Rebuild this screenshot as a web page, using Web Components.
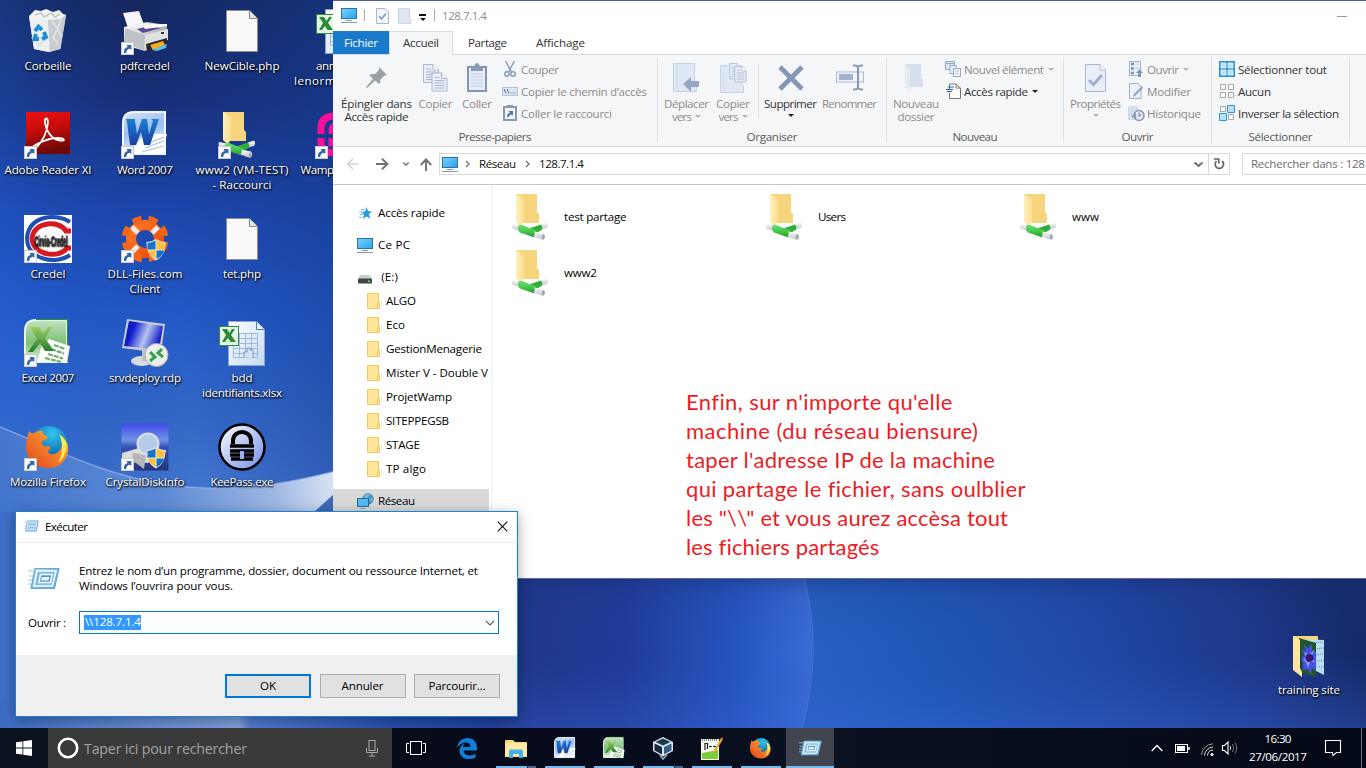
<!DOCTYPE html>
<html lang="fr">
<head>
<meta charset="utf-8">
<title>Bureau</title>
<style>
html,body{margin:0;padding:0;overflow:hidden}
body{font-family:"Open Sans","Noto Sans",sans-serif;font-size:11.6px}
</style>
</head>
<body>
<desk-top></desk-top>
<script>
const arrowBadge='<g transform="translate(0 35)"><rect x=".5" y=".5" width="12" height="12" fill="#fdfdfd" stroke="#c9c9c9"/><path d="M3 11C2.6 7.5 4 5.4 6.6 4.9L5.6 3H10.4V8L8.8 6.8C6.6 7.2 5.4 8.4 5.2 11Z" fill="#3467a8"/></g>';
const shield='<g transform="translate(24.500 24)"><path d="M10.500 0C7.500 2 4.500 2.800 1 3C1 12 4 18 10.500 21.500C17 18 20 12 20 3C16.500 2.800 13.500 2 10.500 0Z" fill="#e8e8e8"/><path d="M10 1.500C7 3.300 5 3.700 2 4V10.500H10Z" fill="#1573c6"/><path d="M11 1.500C14 3.300 16 3.700 19 4V10.500H11Z" fill="#fcc03c"/><path d="M2.500 11.500H10V20C6 18 3.500 15.500 2.500 11.500Z" fill="#fcc03c"/><path d="M18.500 11.500H11V20C15 18 17.500 15.500 18.500 11.500Z" fill="#1573c6"/></g>';
const netFolder='<defs><linearGradient id="a" x2="1"><stop stop-color="#fff0bd"/><stop offset="1" stop-color="#fbdf90"/></linearGradient><linearGradient id="n" x2="0" y2="1"><stop stop-color="#6fdf72"/><stop offset=".5" stop-color="#46c84d"/><stop offset="1" stop-color="#26992e"/></linearGradient><linearGradient id="m" x2="0" y2="1"><stop stop-color="#fafafa"/><stop offset="1" stop-color="#bfc3c8"/></linearGradient></defs><path d="M5 0H26V18L28 20V29H13L5 27Z" fill="#f6d57c"/><path d="M5 0L13 5V28L9.500 32L5 28Z" fill="url(#a)"/><path d="M1 30L9 31.500V37L1 34.500Q0 32 1 30Z" fill="url(#m)"/><path d="M30 30.500L36 28.500Q38 31 36 34L30 35.500Z" fill="url(#m)"/><path d="M18 34.500L30 30.500Q32 32.500 31 35.500L24 40Z" fill="#2fae38"/><path d="M7.500 31.500Q9 30.500 11 31L25 36.500Q27 40 23.500 43.500L9 38.500Q6 36 7.500 31.500Z" fill="url(#n)"/><path d="M23.500 37.500L33 39.500Q36 43 32 46L22.500 42.500Q24.500 40 23.500 37.500Z" fill="url(#m)"/><ellipse cx="32.300" cy="42.700" rx="1.500" ry="2.500" fill="#a4a8ad"/>';
const page='<path d="M8.500 3.500H31.500L39.500 11.500V44.500H8.500Z" fill="#f9f9f9" stroke="#8c8c8c"/><path d="M31.500 3.500V11.500H39.500" fill="#e4e4e4" stroke="#8c8c8c"/>';
const wordLogo='<defs><linearGradient id="w" x1="0" y1="0" x2=".3" y2="1"><stop stop-color="#d6e6fa"/><stop offset=".5" stop-color="#9cbdee"/><stop offset="1" stop-color="#e9f2fd"/></linearGradient><linearGradient id="v" x2="0" y2="1"><stop stop-color="#1c7fd6"/><stop offset="1" stop-color="#1a3d9e"/></linearGradient></defs><path d="M12 1H43V43H1V12Q1 1 12 1Z" fill="url(#w)" stroke="#f1f6fc" stroke-width="2"/><path d="M8 42L22 23L45 23L42 34V42Z" fill="#fff"/><path d="M27 32L42 26M23 37L42 30M20 41L41 35" stroke="#a9c2e6" stroke-width="1.200"/><path d="M4 8H13V10L15 23L20 8H25L27 23L31 10L29 8H37L28 34H22L19 21L14 34H8L5 11Z" fill="url(#v)"/>';
const excelLogo='<defs><linearGradient id="w" x2="0" y2="1"><stop stop-color="#c2e3bd"/><stop offset=".55" stop-color="#7cbf75"/><stop offset="1" stop-color="#edf8ea"/></linearGradient><linearGradient id="v" x2="0" y2="1"><stop stop-color="#9ad060"/><stop offset="1" stop-color="#257a2d"/></linearGradient></defs><path d="M12 1H43V43H1V12Q1 1 12 1Z" fill="url(#w)" stroke="#e6f5e4" stroke-width="2"/><path d="M12 .5H43.500V43" fill="none" stroke="#2b8b3c"/><path d="M17 28L25 20L46 27L43 44L14 42Z" fill="#fff"/><path d="M30 26L41 30M27 30L40 34.500M24 35L39 39.500M21 39L37 43" stroke="#6fae6a" stroke-width="2.200" stroke-dasharray="5 1"/><path d="M6 8H15L19 15L24 8H28L21 19L30 32H21L16 24L9 33H4L13 20Z" fill="url(#v)"/>';
const firefox='<defs><radialGradient id="b" cx=".6" cy=".2" r=".8"><stop stop-color="#32c6ee"/><stop offset=".6" stop-color="#1478b8"/><stop offset="1" stop-color="#123a78"/></radialGradient><linearGradient id="f" x1="0" x2="1" y1="1" y2="0"><stop stop-color="#e0431c"/><stop offset=".6" stop-color="#f5872a"/><stop offset="1" stop-color="#fde23c"/></linearGradient></defs><circle cx="25" cy="22" r="20" fill="url(#b)"/><path d="M5 7C6 9 8 10 11 9C14 7 17 7 19 7L19 10C22 11 24 13 24 15L18 18C18 22 20 23 26 23C28 24 27 26 24 28C28 34 36 30 38 24C40 18 38 14 36 11C42 14 46 20 45 28C43 38 36 45 25 45C12 45 2 36 2 23C2 17 4 12 5 7Z" fill="url(#f)"/><path d="M36 11C43 15 45 22 42 29C41 34 38 37 35 39C40 30 40 20 36 11Z" fill="#fde85a"/>';
const runIcon='<defs><linearGradient id="r" x2="1" y2="1"><stop stop-color="#b8dcf3"/><stop offset="1" stop-color="#4ba2de"/></linearGradient></defs><path d="M0 4H6M1 9H5M0 13H4M0 17H3" stroke="#9ac8e8" stroke-width="1.200"/><path d="M7 1.500H31L26.500 21.500H3Z" fill="url(#r)" stroke="#69a8d6" stroke-width="1.200"/><path d="M9 4H28L24.500 19H6Z" fill="#7fbce6" stroke="#fff" stroke-width="1.500"/><path d="M12.500 7.500H24L22.500 15.500H11Z" fill="#4d98d4" stroke="#fff" stroke-width="1.500"/><path d="M14 10H21.500L20.500 13.500H13Z" fill="#e7f4fc"/>';
const pcIcon='<defs><linearGradient id="p" x2="1" y2="1"><stop stop-color="#77d5ff"/><stop offset="1" stop-color="#2ba0ee"/></linearGradient></defs><rect x=".5" y=".5" width="15" height="10" fill="url(#p)" stroke="#2e7399"/><path d="M5 12.500H11M0 14.500H16" stroke="#7f9db0" stroke-width="1"/>';
const paper='<path d="M.5 .5H10L15.500 6V18.500H.5Z" fill="#e9eff8" stroke="#a9b8cf"/><path d="M10 .5V6H15.500" fill="#fff" stroke="#a9b8cf"/><path d="M3 5H8M3 8H13M3 10.500H13M3 13H13M3 15.500H13" stroke="#a9b8cf"/>';
const I={
bin:[48,48,'<path d="M5 9L42 8L36.500 42L24 45L10 42Z" fill="#d9dcde"/><path d="M5 9L24 12L26 45L10 42Z" fill="#eceeef"/><path d="M24 12L42 8L36 42L26 45Z" fill="#c9cdd0"/><path d="M28 14L34 22L29 30L34 37M37 12L34 22L37 30M8 30L15 38L22 32" stroke="#dfe2e4" stroke-width="2" fill="none"/><path d="M5 9L11 3L17 4L22 2L29 5L35 3L39 7L42 8L36 12L25 13L12 12Z" fill="#f4f4f4"/><path d="M11 8L17 6L20 10L27 6L31 10L36 7" stroke="#c3c7ca" fill="none" stroke-width="1.500"/><g fill="none" stroke="#1a8bdd" stroke-width="3.800"><path d="M11 24L14.500 19.500L18 23"/><path d="M20 25L22 30L18 32"/><path d="M15 32H10.500L12 27"/></g>'],
printer:[48,48,'<defs><linearGradient id="g" x2="1"><stop stop-color="#fafafa"/><stop offset="1" stop-color="#a9abae"/></linearGradient></defs><path d="M2 6L18 4L23 18L7 21Z" fill="#f6f7f8"/><path d="M3 20L26 15L46 18L46 34L24 44L3 38Z" fill="url(#g)"/><path d="M4 21L24 28L23 43L3 36Z" fill="#bfc2c5"/><path d="M8 19L24 16L44 18L25 24Z" fill="#f3f3f3"/><path d="M16 22L26 19.500L40 21L22 26Z" fill="#5b4a96"/><path d="M24 28L47 22V33L24 40Z" fill="#dfe1e3"/><path d="M25 37L46 31V37L26 44Z" fill="#29292d"/><path d="M29 38L42 34L44 38L32 43Z" fill="#f5ab23"/><path d="M31 43L46 37L45 41L36 44Z" fill="#55c1e8"/><path d="M21 18L46 17V19L24 22Z" fill="#fff"/><rect x="40" y="25" width="3" height="2" fill="#333"/>'+arrowBadge],
page:[48,48,page],
xlsx:[48,48,'<defs><linearGradient id="g" x2="1" y2="1"><stop stop-color="#fff"/><stop offset="1" stop-color="#c3daf3"/></linearGradient></defs><path d="M10.500 2.500H38.500L46.500 10.500V46.500H10.500Z" fill="url(#g)" stroke="#8aa5ca"/><path d="M38.500 2.500V10.500H46.500" fill="#e8f0fa" stroke="#5779ab"/><path d="M15 14.500H39.500V38.500H15.500ZM15 19.500H39M15 24.500H39M15 29.500H39M15 34.500H39M21.500 14V39M27.500 14V39M33.500 14V39" fill="none" stroke="#9fb9dc"/><path d="M26 38V33H29V29H32V31H35V39" fill="#d5e4f5" stroke="#6f94c4"/><rect x="1.500" y="7.500" width="19" height="19" fill="#e6f5e4" stroke="#34864a"/><path d="M4 10H9L11.500 14L14 10H17L13 16L18 23H12.500L10 19L7 23H4L8 16Z" fill="#2c8b39"/>'],
adobe:[48,48,'<defs><linearGradient id="g" x2=".2" y2="1"><stop stop-color="#ee1111"/><stop offset=".45" stop-color="#c70c0c"/><stop offset="1" stop-color="#6e0808"/></linearGradient></defs><rect x="2" y="1" width="44" height="42" fill="url(#g)"/><path d="M12 37C20 29 23 20 24 12C24 6 20 6 21 12C22 20 28 28 34 29C43 31 41 27 33 27C26 27 19 30 13 33C8 36 6 38 10 38C11 38 12 37 13 36" fill="none" stroke="#fff" stroke-width="1.800"/>'+arrowBadge],
word:[48,48,'<g transform="translate(1 0)">'+wordLogo+'</g>'+arrowBadge],
wordS:[46,46,wordLogo],excelS:[47,46,excelLogo],
netFolder:[38,46,netFolder],
netDesk:[48,48,'<g transform="translate(0 1)">'+netFolder+'</g>'+arrowBadge],
wamp:[48,48,'<g fill="none" stroke="#f5109a" stroke-width="7"><path d="M6 23V17Q6 5 20 5H30V14H25Q17 14 17 20V23M6 27V32Q6 42 20 42H30M17 27V32H30"/></g>'+arrowBadge],
credel:[48,48,'<rect width="48" height="48" fill="#fff"/><path d="M46 7C33 -2 5 0 3 23C3 45 32 50 46 40" fill="none" stroke="#1e4fb4" stroke-width="4"/><path d="M47 16H42C36 5 10 6 8 23C9 42 37 43 43 33H47" fill="none" stroke="#d81921" stroke-width="5"/><g transform="translate(10.500 31) scale(1 1.500)"><text font-family="Liberation Sans" font-weight="bold" font-size="10" textLength="33" lengthAdjust="spacingAndGlyphs" fill="#333">Cirvia-Credel</text></g>'+arrowBadge],
dll:[48,48,'<defs><linearGradient id="g" x2="1" y2="1"><stop stop-color="#ff7924"/><stop offset="1" stop-color="#e94a0a"/></linearGradient></defs><circle cx="24" cy="24" r="14" fill="none" stroke="url(#g)" stroke-width="10"/><circle cx="24" cy="24" r="20" fill="none" stroke="#f36518" stroke-width="7" stroke-dasharray="9 6.710" transform="rotate(8 24 24)"/><path d="M11 12L17 18M37 12L31 18M11 37L17 31" stroke="#e9e9e9" stroke-width="5"/>'+shield+arrowBadge],
excel:[48,48,excelLogo+arrowBadge],
rdp:[48,48,'<defs><linearGradient id="g" x2="1" y2=".3"><stop stop-color="#0713a5"/><stop offset=".3" stop-color="#1220d0"/><stop offset=".65" stop-color="#b7c3f3"/><stop offset="1" stop-color="#1723c6"/></linearGradient></defs><ellipse cx="21" cy="42" rx="11" ry="5" fill="#d8dadd"/><path d="M21 29L30 31L29 42H21Z" fill="#bfc3c7"/><path d="M6 0L44 5L40 34L1 29Z" fill="#c8ccd0"/><path d="M8 2L42 7L38 31L3 27Z" fill="url(#g)"/><circle cx="35.500" cy="36" r="11.500" fill="#eceeee" stroke="#aaa"/><path d="M29 33L34 38L29 42M41 30L37 34L42 38" fill="none" stroke="#35a148" stroke-width="3"/>'],
ffDesk:[48,48,'<g transform="translate(0 1) scale(.98)">'+firefox+'</g>'+arrowBadge],
ff:[48,48,firefox],
crystal:[48,48,'<defs><linearGradient id="g" x2="0" y2="1"><stop stop-color="#3d4bea"/><stop offset=".35" stop-color="#7191e8"/><stop offset=".5" stop-color="#3553b8"/><stop offset="1" stop-color="#23357c"/></linearGradient></defs><rect x=".5" y=".5" width="47" height="47" fill="url(#g)"/><path d="M1 30L18 25L46 28L27 40L1 39Z" fill="#dcdcdc"/><path d="M12 30L25 32L23 46L11 37Z" fill="#b7b7b7"/><circle cx="27" cy="21" r="10.500" fill="#b4cbea" stroke="#d9dfe6" stroke-width="2"/>'+shield+arrowBadge],
keepass:[48,48,'<defs><linearGradient id="g" x2="1" y2="1"><stop stop-color="#fff"/><stop offset="1" stop-color="#6f8ce8"/></linearGradient></defs><circle cx="24" cy="24" r="22.500" fill="url(#g)" stroke="#000" stroke-width="2.500"/><path d="M15 21V18C15 6 33 6 33 18V21" fill="none" stroke="#000" stroke-width="4"/><path d="M12 23H36M12 28H36M12 32H36M13 36H35" stroke="#000" stroke-width="3.500"/><rect x="22" y="28" width="4" height="8" fill="#9aadf0"/>'],
training:[48,48,'<g transform="translate(0 4)"><path d="M8 1H33V12H14L8 36Z" fill="#f8d67b"/><path d="M19 4L39 5V40L31 36Z" fill="#b9dcf2"/><path d="M27 8L39 7M28 14L39 13M29 20L39 19M30 26L39 25M30 32L39 32" stroke="#668eb9" stroke-dasharray="1 1"/><path d="M14 3L31 8V42L17 38Z" fill="#23552b"/><path d="M18 9L23 13L27 9L27 15L31 17V36L27 33L26 39L22 34L18 35V27L16 23L19 20L17 14L21 16Z" fill="#4053e0"/><path d="M19 17L24 20L29 15L27 22L30 27L25 27L23 33L21 27L18 25L21 22Z" fill="#8d96ff"/><circle cx="24.500" cy="23" r="4" fill="#39186f"/><path d="M8 1L15 5V33L17 37V42L8 35Z" fill="#ffe6a0"/></g>'],
pc:[16,15,pcIcon],
check:[13,16,'<path d="M.5 .5H9L12.500 4V15.500H.5Z" fill="#f2f5fa" stroke="#a6b6cd"/><path d="M3 8L5.500 11L10 5.500" fill="none" stroke="#7f98bb" stroke-width="1.500"/>'],
newf:[13,16,'<path d="M.5 .5H11.500V10L12.500 11V15.500H.5Z" fill="#dfe7f2" stroke="#cad5e6"/>'],
pin:[22,21,'<path d="M13 0L21 8L18 9L14 13C15 15 14 16 13 17L9 13.500L1 21L0 20L7 12L3 8C5 7 7 7 9 7L13 3Z" fill="#9a9fa6"/>'],
copy:[25,28,paper+'<g transform="translate(8.500 8.500)">'+paper+'</g>'],
paste:[20,29,'<rect x="1" y="4" width="18" height="24" fill="#e6edf7" stroke="#8295b3" stroke-width="2"/><path d="M4 8V4H7Q8 0 10 0Q12 0 13 4H16V8Z" fill="#8a9bb6"/><path d="M4 11H16M4 14H16M4 17H16M4 20H16M4 23H16" stroke="#bccadd"/>'],
cut:[12,16,'<path d="M1.500 0L7.500 11M10.500 0L4.500 11" stroke="#8b9cb8" stroke-width="1.500"/><circle cx="3" cy="13" r="2.200" fill="none" stroke="#8b9cb8" stroke-width="1.500"/><circle cx="9" cy="13" r="2.200" fill="none" stroke="#8b9cb8" stroke-width="1.500"/>'],
path:[16,9,'<rect x=".5" y=".5" width="15" height="8" fill="#dee7f3" stroke="#b4c1d6"/><path d="M2 2L4 6.500M5 2L7 6.500M8.500 6H9.500M10.500 6H11.500M12.500 6H13.500" stroke="#536e98"/>'],
pasteL:[14,16,'<rect x="1" y="2" width="12" height="13" fill="#f2f5fa" stroke="#8798b5" stroke-width="2"/><path d="M4 0H10V3H4Z" fill="#8798b5"/><path d="M4 12C4 9 5 8 7 8L5.500 6H10V10.500L8.500 9.500C7 10 6 10.500 6 12Z" fill="#5c76a0"/>'],
move:[27,29,'<path d="M.5 .5H21.500V19L23.500 21V28.500H.5Z" fill="#dfe8f4" stroke="#c5d2e5"/><path d="M4 1V28" stroke="#cfdbea"/><path d="M10 21L18 14V18H26V24H18V29Z" fill="#96a7c4"/>'],
copyto:[27,30,'<path d="M.5 2.500H21.500V21L23.500 23V29.500H.5Z" fill="#dfe8f4" stroke="#c5d2e5"/><path d="M4 3V29" stroke="#cfdbea"/><g transform="translate(9.500 0) scale(.75 .85)">'+paper+'</g><g transform="translate(14.500 3) scale(.75 .85)">'+paper+'</g>'],
del:[26,26,'<path d="M2 2L24 24M24 2L2 24" stroke="#8495b5" stroke-width="4.800"/>'],
rename:[28,27,'<rect x=".5" y="8" width="27" height="10" fill="#f1f5fa" stroke="#a9b9d2"/><rect x="3" y="10" width="14" height="6" fill="#a1b2cc"/><path d="M17 1.500Q21 1 22 3Q23 1 27 1.500M17 25.500Q21 26 22 24Q23 26 27 25.500M22 3V24" fill="none" stroke="#8699b8" stroke-width="2"/>'],
newfolder:[22,27,'<path d="M0 0H16V13L18 15V23H5Z" fill="#d5dfed"/><path d="M0 0L5 4V27L0 23Z" fill="#e3ebf5"/>'],
newitem:[16,16,'<rect x=".5" y=".5" width="9" height="8" fill="#dce5f2" stroke="#96a9c5"/><path d="M1 2.500H9" stroke="#96a9c5"/><rect x="5" y="4.500" width="6" height="8" fill="#edf2f9" stroke="#96a9c5"/><rect x="8.500" y="7.500" width="7" height="8" fill="#f5f8fc" stroke="#96a9c5"/><path d="M10 10H14M10 12.500H14" stroke="#b7c6da"/>'],
easy:[15,16,'<path d="M3.500 6V1H10L14.500 5V15.500H3.500V10" fill="#fff" stroke="#777"/><path d="M10 1V5H14.500" fill="none" stroke="#777"/><path d="M2 4H8M0 6.500H7M1 8.500H6" stroke="#1c62ad" stroke-width="1.200"/>'],
props:[21,28,'<path d="M.5 .5H15L20.500 6V27.500H.5Z" fill="#e9eff8" stroke="#a9b8cf"/><path d="M15 .5V6H20.500" fill="#fff" stroke="#a9b8cf"/><path d="M4 16L8.500 20.500L17 11" fill="none" stroke="#a0b1cc" stroke-width="3"/>'],
open:[14,16,'<rect x=".5" y=".5" width="11" height="14" fill="#edf2f9" stroke="#9fb0ca"/><path d="M2 3H5M2 7.500H5M2 12H5" stroke="#798fb3" stroke-width="2.500"/><path d="M6.500 3H10M6.500 7H10" stroke="#b4c2d8"/><path d="M7 12L10.500 8L14 12H12V16H9V12Z" fill="#8497b8"/>'],
edit:[14,16,'<path d="M.5 .5H9L12 4V15.500H.5Z" fill="#edf2f9" stroke="#9fb0ca"/><path d="M4 14L5 11L13 3L14 5L6 13Z" fill="#8fa2c0"/>'],
hist:[16,16,'<path d="M0 1H10V11L11 12V15H0Z" fill="#d2dcea"/><circle cx="11" cy="10.500" r="5" fill="#e6ecf5" stroke="#8497b5" stroke-width="1.500"/><path d="M4 12L7 9L8 13M11 7.500V11L13.500 9.500" fill="none" stroke="#8497b5" stroke-width="1.300"/>'],
selall:[16,16,'<rect width="16" height="16" fill="#2b93df"/><path d="M2 2H7V7H2ZM9 2H14V7H9ZM2 9H7V14H2ZM9 9H14V14H9Z" fill="#b9e0fb" stroke="#fff" stroke-width=".7"/>'],
selnone:[16,16,'<path d="M1.500 1.500H6.500V6.500H1.500ZM9.500 1.500H14.500V6.500H9.500ZM1.500 9.500H6.500V14.500H1.500ZM9.500 9.500H14.500V14.500H9.500Z" fill="#fff" stroke="#a6a6a6"/>'],
selinv:[16,16,'<path d="M1.500 1.500H6.500V6.500H1.500ZM9.500 9.500H14.500V14.500H9.500Z" fill="#fff" stroke="#a6a6a6"/><path d="M8.500 .5H15.500V7.500H8.500ZM.5 8.500H7.500V15.500H.5Z" fill="#b9e0fb" stroke="#2b93df"/>'],
left:[13,12,'<path d="M13 6H2M7 .8L1.500 6L7 11.200" fill="none" stroke="#d6d6d6" stroke-width="1.700"/>'],
right:[13,12,'<path d="M0 6H11M6 .8L11.500 6L6 11.200" fill="none" stroke="#707070" stroke-width="1.900"/>'],
up:[12,13,'<path d="M6 13V2M.8 7L6 1.500L11.200 7" fill="none" stroke="#707070" stroke-width="1.900"/>'],
chev:[8,6,'<path d="M1.300 1.500L4 4L6.700 1.500" fill="none" stroke="#777" stroke-width="1.600"/>'],
chevB:[11,7,'<path d="M1.500 1.500L5.500 5L9.500 1.500" fill="none" stroke="#6d6d6d" stroke-width="2"/>'],
chevT:[10,6,'<path d="M.8 .8L5 5L9.200 .8" fill="none" stroke="#555" stroke-width="1.100"/>'],
gt:[5,8,'<path d="M1 1L4 4L1 7" fill="none" stroke="#777" stroke-width="1.400"/>'],
refresh:[11,12,'<path d="M2.500 3.200A4.200 4.200 0 1 0 8 3" fill="none" stroke="#666" stroke-width="1.700"/><path d="M0 1H4.800V5.500" fill="none" stroke="#666" stroke-width="1.700"/>'],
star:[15,14,'<path d="M8.500 1L10 5L14 5.500L11 8L12 12.500L8.500 10.500L5 13L6 8.500L3.500 6L7 5.500Z" fill="#259ce0"/><path d="M3 3.500H6M1 6H4M2 8.500H5M1 11.500H4" stroke="#7cc5ee"/>'],
drive:[14,13,'<path d="M2 4H12L14 8H0Z" fill="#c9cccd"/><rect y="7.500" width="14" height="5" rx="1" fill="#3f4447"/><rect x="10" y="9.500" width="2" height="1.500" fill="#57e066"/>'],
folder:[13,16,'<path d="M.5 .5H11.500V9.500H12.500V15.500H.5Z" fill="#ffe699" stroke="#edc95c"/><path d="M10.500 10V15" stroke="#edc95c"/>'],
net:[17,16,'<circle cx="11" cy="6" r="5.800" fill="#4693bd"/><path d="M7 3Q10 0 13 2Q11 5 8 6ZM12 6L16 5L15 9Z" fill="#7fb9d4"/><rect x=".5" y="5.500" width="11" height="8" fill="#52baf4" stroke="#256d9a"/><path d="M3 15.500H9" stroke="#8ba5b5"/>'],
run:[32,23,runIcon],
close:[11,11,'<path d="M.7 .7L10.300 10.300M10.300 .7L.7 10.300" stroke="#111" stroke-width="1.150"/>'],
win:[16,16,'<path d="M0 2.300L6.500 1.400V7.500H0ZM7.300 1.300L16 0V7.500H7.300ZM0 8.400H6.500V14.600L0 13.700ZM7.300 8.400H16V16L7.300 14.800Z" fill="#fff"/>'],
ring:[22,22,'<circle cx="11" cy="11" r="9.200" fill="none" stroke="#fff" stroke-width="2.500"/>'],
mic:[12,17,'<rect x="3" y=".5" width="6" height="10" fill="none" stroke="#aaa"/><path d="M.5 8V12.500H11.500V8M6 12.500V16M3 16H9" fill="none" stroke="#aaa"/>'],
tview:[20,14,'<rect x="4.500" y=".5" width="11" height="13" fill="none" stroke="#fff"/><path d="M3 2.500H.5V11.500H3M17 2.500H19.500V11.500H17" fill="none" stroke="#fff"/>'],
edge:[20,21,'<path d="M0 9.500C1 3.500 5 0 10.500 0C17 0 20 5 20 10V12.500H6.500C6.800 18 14 18.500 18.500 15.800V19.500C11 23 2.500 20.500 2.500 13C2.500 9 5 6.500 8 5.500C6.500 6.700 6.200 8 6 9H13.500C13.500 3 5 3 0 9.500Z" fill="#0f7fdc"/>'],
expl:[22,19,'<path d="M0 2Q0 1 1 1H8L10 3H22V18H0Z" fill="#f8d775"/><path d="M2 4H22V17H0V5Z" fill="#ffe9a2"/><path d="M4 19V12Q4 10.500 5.500 10.500H16.500Q18 10.500 18 12V19H14V15H8V19Z" fill="#3fb2ea"/>'],
vbox:[20,22,'<path d="M10 0L20 5V14L10 19.500L0 14V5Z" fill="#dce7f2"/><path d="M10 1.500L17.500 5L10 8.500L2.500 5Z" fill="#1d3754"/><path d="M1.500 6.500L9 10V17.500L1.500 13.500Z" fill="#16293f"/><path d="M11 10L18.500 6.500V13.500L11 17.500Z" fill="#345e8a"/><path d="M7 18L10 22L14 18" fill="none" stroke="#9aaabb" stroke-width="1.500"/>'],
npp:[22,23,'<rect y="2" width="18" height="21" fill="#f7f8ef"/><path d="M1 3H17" stroke="#888" stroke-dasharray="1 1" stroke-width="2"/><path d="M1 16L17 13V22H1Z" fill="#7ccc3a"/><path d="M4 6V13M4.500 6.500H6.500V12M8 9.500H11M12 9.500H15" stroke="#222" fill="none" stroke-width="1.200"/><path d="M12 17L13 13L20 1L22 2L15 14Z" fill="#eda92a"/><path d="M20 1L22 2L21.500 0Z" fill="#d84735"/>'],
tup:[12,8,'<path d="M.7 7L6 1.500L11.300 7" fill="none" stroke="#fff" stroke-width="1.300"/>'],
bat:[15,9,'<rect x=".5" y=".5" width="12" height="8" fill="none" stroke="#fff"/><rect x="2" y="2" width="8" height="5" fill="#fff"/><path d="M14 3V6" stroke="#fff" stroke-width="1.500"/>'],
wifi:[13,13,'<g fill="none" stroke="#ddd"><path d="M.5 12A12 12 0 0 1 12 .8" stroke="#999"/><path d="M3.500 12.500A9 9 0 0 1 12 4"/><path d="M6.500 12.500A6 6 0 0 1 12 7"/></g><circle cx="11" cy="11.500" r="1.500" fill="#fff"/>'],
vol:[17,14,'<path d="M.5 4.500H2.500L6 1V13L2.500 9.500H.5Z" fill="none" stroke="#fff" stroke-width="1.100"/><path d="M8 5Q9.500 7 8 9" fill="none" stroke="#ddd"/><path d="M10.500 3Q13 7 10.500 11M13 1.500Q16.500 7 13 12.500" fill="none" stroke="#777"/>'],
notif:[16,16,'<path d="M.5 .5H15.500V12.500H11.500L8 15.500L7.500 12.500H.5Z" fill="none" stroke="#fff" stroke-width="1.100"/>']
};
function def(tag,css,html,setup){
  customElements.define(tag,class extends HTMLElement{
    constructor(){super();this.attachShadow({mode:'open'})}
    connectedCallback(){
      if(this.ready)return;this.ready=true;
      const a=n=>this.getAttribute(n)||'';
      this.shadowRoot.innerHTML='<style>'+css+'</style>'+(typeof html==='function'?html(a,this):html);
      if(setup)setup(this,a);
    }
  });
}
/* "text|width" pairs, separated by ";;", one line each */
const lines=s=>s.split(';;').map(p=>{const i=p.lastIndexOf('|');return '<fit-text w="'+p.slice(i+1)+'">'+p.slice(0,i)+'</fit-text>'}).join('');

def('desk-wallpaper',':host{position:absolute;inset:0;display:block}svg{display:block}',`
<svg width="1366" height="768" viewBox="0 0 1366 768"><defs>
<linearGradient id="sky" x1="0" y1="0" x2="0" y2="500" gradientUnits="userSpaceOnUse"><stop stop-color="#14275c"/><stop offset=".2" stop-color="#172f79"/><stop offset=".42" stop-color="#1c46ab"/><stop offset=".62" stop-color="#2258c6"/><stop offset=".85" stop-color="#3569c8"/><stop offset="1" stop-color="#4477cf"/></linearGradient>
<linearGradient id="shade" x1="0" x2="340" y1="260" y2="220" gradientUnits="userSpaceOnUse"><stop stop-color="#2563dc" stop-opacity=".35"/><stop offset=".5" stop-color="#1a3d99" stop-opacity="0"/><stop offset="1" stop-color="#163c92" stop-opacity=".5"/></linearGradient>
<linearGradient id="low" x1="0" y1="560" x2="335" y2="470" gradientUnits="userSpaceOnUse"><stop stop-color="#4073cc"/><stop offset=".5" stop-color="#5c8ad5"/><stop offset=".8" stop-color="#9ab5e2"/><stop offset="1" stop-color="#dce6f5"/></linearGradient>
<linearGradient id="base" x1="0" x2="520" y1="0" y2="0" gradientUnits="userSpaceOnUse"><stop stop-color="#3b6cc5"/><stop offset=".46" stop-color="#7e9fda"/><stop offset=".48" stop-color="#517bd0"/><stop offset=".75" stop-color="#264fae"/><stop offset="1" stop-color="#1f3f9c"/></linearGradient>
<linearGradient id="arc" x1="500" x2="813" y1="0" y2="0" gradientUnits="userSpaceOnUse"><stop stop-color="#1e3587"/><stop offset=".4" stop-color="#213b98"/><stop offset=".75" stop-color="#2554bf"/><stop offset="1" stop-color="#3b6cd6"/></linearGradient>
<linearGradient id="right" x1="810" x2="1340" y1="720" y2="580" gradientUnits="userSpaceOnUse"><stop stop-color="#2a60c4"/><stop offset=".2" stop-color="#2159ba"/><stop offset=".5" stop-color="#204aa8"/><stop offset=".8" stop-color="#1e388c"/><stop offset="1" stop-color="#152a68"/></linearGradient>
<linearGradient id="dusk" y1="578" y2="728" x2="0" gradientUnits="userSpaceOnUse"><stop stop-color="#162c71" stop-opacity=".4"/><stop offset=".12" stop-color="#1a3680" stop-opacity=".12"/><stop offset=".5" stop-color="#2455bc" stop-opacity="0"/><stop offset="1" stop-color="#3c68d6" stop-opacity=".3"/></linearGradient></defs>
<rect width="1366" height="768" fill="url(#sky)"/><rect width="340" height="512" fill="url(#shade)"/>
<path d="M0 427C50 447 100 474 167 485C230 493 280 486 340 470V600H0Z" fill="url(#low)"/><path d="M0 427C50 447 100 474 167 485C230 493 280 486 340 470" fill="none" stroke="#a8c2ea" stroke-opacity=".6" stroke-width="1.500"/>
<path d="M314 512L334 494V512Z" fill="#4268b5"/>
<rect y="512" width="16" height="216" fill="#3d70c8"/><rect y="700" width="530" height="40" fill="url(#base)"/>
<rect x="500" y="560" width="866" height="180" fill="url(#right)"/><path d="M500 560H801Q824 648 800 740H500Z" fill="url(#arc)"/><path d="M803 575Q824 648 802 728" fill="none" stroke="#5a88df" stroke-opacity=".6"/><rect x="500" y="578" width="866" height="150" fill="url(#dusk)"/>
</svg>`);
def('ui-icon',':host{display:block;flex:none;line-height:0}svg{display:block;overflow:visible}',(a)=>{const i=I[a('name')];return `<svg width="${a('w')||i[0]}" height="${a('h')||i[1]}" viewBox="0 0 ${i[0]} ${i[1]}" preserveAspectRatio="none">${i[2]}</svg>`});
def('desk-icon',':host{position:absolute;width:96px;display:flex;flex-direction:column;align-items:center;color:#fff;line-height:15px;text-shadow:1px 1px 2px #000,0 1px 2px rgba(0,0,0,.8)}ui-icon{margin-bottom:3px}',
 a=>`<ui-icon name="${a('icon')}"></ui-icon>`+lines(a('label')),(e,a)=>{e.style.left=(a('cx')-48)+'px';e.style.top=a('top')+'px'});
def('drop-mark',':host{display:block;flex:none;border:3px solid transparent;border-top-color:var(--mark,#b5b5b5);border-bottom:0;width:0;height:0}','');
def('big-button',':host{display:flex;flex-direction:column;align-items:center;flex:none;line-height:13px;color:#8b8b8b;height:70px}:host([on]){color:#333;--mark:#222}.i{height:39px;display:flex;align-items:center;justify-content:center}.r{display:flex;align-items:center;gap:3px;min-height:11px}',
 a=>`<div class="i"><ui-icon name="${a('icon')}"></ui-icon></div>`+lines(a('label'))+(a('label2')?`<div class="r">${lines(a('label2'))}<drop-mark></drop-mark></div>`:'')+(a('mark')?'<div class="r"><drop-mark></drop-mark></div>':''),(e,a)=>{e.style.width=a('w')+'px'});
def('small-button',':host{display:flex;align-items:center;height:22px;color:#8b8b8b}:host([on]){color:#333;--mark:#222}.i{width:16px;display:flex;justify-content:center;margin-right:3px}drop-mark{margin-left:4px}',
 a=>`<div class="i"><ui-icon name="${a('icon')}"></ui-icon></div>`+lines(a('label'))+(a('mark')?'<drop-mark></drop-mark>':''));
def('ribbon-group',':host{display:flex;flex-direction:column;flex:none;box-sizing:border-box;height:86px;border-right:1px solid #dfe1e4}.b{display:flex;flex:none;height:72px;box-sizing:border-box;padding-top:1px}.l{flex:none;height:16px;line-height:16px;display:flex;justify-content:center;color:#5a5a5a}',
 a=>`<div class="b"><slot></slot></div><div class="l">${lines(a('label'))}</div>`,(e,a)=>{e.style.width=a('w')+'px'});
def('explorer-ribbon',':host{display:flex;flex:none;height:93px;box-sizing:border-box;background:#f5f6f7;border-top:1px solid #dadbdc;border-bottom:1px solid #dadbdc;padding-top:2px}.col{flex:none}.sep{width:1px;height:55px;background:#dfe1e4;margin:6px 3px 0 3px;flex:none}',`
<ribbon-group w="325" label="Presse-papiers|73"><big-button on style="margin-left:4px" w="79" icon="pin" label="Épingler dans|71;;Accès rapide|64"></big-button><big-button w="39" icon="copy" label="Copier|34"></big-button><big-button w="44" icon="paste" label="Coller|30"></big-button>
<div class="col" style="margin-left:3px"><small-button icon="cut" label="Couper|38"></small-button><small-button icon="path" label="Copier le chemin d’accès|126"></small-button><small-button icon="pasteL" label="Coller le raccourci|91"></small-button></div></ribbon-group>
<ribbon-group w="229" label="Organiser|51"><big-button style="margin-left:4px" w="49" icon="move" label="Déplacer|45" label2="vers|20"></big-button><big-button w="44" icon="copyto" label="Copier|34" label2="vers|20"></big-button><div class="sep"></div><big-button on w="57" icon="del" label="Supprimer|53" mark="1"></big-button><big-button w="61" icon="rename" label="Renommer|55"></big-button></ribbon-group>
<ribbon-group w="177" label="Nouveau|45"><big-button style="margin-left:4px" w="50" icon="newfolder" label="Nouveau|46;;dossier|37"></big-button><div class="col" style="margin-left:4px"><small-button icon="newitem" label="Nouvel élément|80" mark="1"></small-button><small-button on icon="easy" label="Accès rapide|64" mark="1"></small-button></div></ribbon-group>
<ribbon-group w="148" label="Ouvrir|32"><big-button style="margin-left:4px" w="55" icon="props" label="Propriétés|51" mark="1"></big-button><div class="col" style="margin-left:5px"><small-button icon="open" label="Ouvrir|32" mark="1"></small-button><small-button icon="edit" label="Modifier|44"></small-button><small-button icon="hist" label="Historique|54"></small-button></div></ribbon-group>
<ribbon-group w="138" label="Sélectionner|64"><div class="col" style="margin-left:7px"><small-button on icon="selall" label="Sélectionner tout|89"></small-button><small-button on icon="selnone" label="Aucun|33"></small-button><small-button on icon="selinv" label="Inverser la sélection|101"></small-button></div></ribbon-group>`);
def('explorer-title',':host{display:flex;flex:none;align-items:center;height:30px;padding-left:8px;color:#8f8f8f}ui-icon{margin-top:-1px}fit-text{margin-top:-1px}.s{width:1px;height:12px;background:#aaa;margin-top:-2px}.q{display:flex;flex-direction:column;align-items:center;gap:2px;--mark:#111;margin:3px 11px 0 8px}.q i{width:7px;height:1.500px;background:#111}.m{width:10px;height:1px;background:#999;margin:0 19px 0 auto}',
 `<ui-icon name="pc"></ui-icon><div class="s" style="margin-left:7px;margin-right:11px"></div><ui-icon name="check"></ui-icon><ui-icon name="newf" style="margin-left:9px"></ui-icon><div class="q"><i></i><drop-mark></drop-mark></div><div class="s" style="margin-right:7px;margin-left:-3px"></div><fit-text w="45">128.7.1.4</fit-text><div class="m"></div>`);
def('explorer-tabs',':host{display:flex;flex:none;height:24px;line-height:23px;color:#333;position:relative;margin-bottom:-1px}div{display:flex;justify-content:center;box-sizing:border-box}.f{width:56px;background:#1979ca;color:#fff;height:23px}.a{width:64px;background:#f5f6f7;border:1px solid #dadbdc;border-bottom:0}',
 '<div class="f"><fit-text w="34">Fichier</fit-text></div><div class="a" style="line-height:22px"><fit-text w="36">Accueil</fit-text></div><div style="margin-left:15px"><fit-text w="39">Partage</fit-text></div><div style="margin-left:29px"><fit-text w="49">Affichage</fit-text></div>');
def('address-bar',':host{display:flex;flex:none;height:38px;box-sizing:border-box;border-bottom:1px solid #c6c6c6;padding-top:6px;color:#111}.n{width:106px;flex:none;display:flex;align-items:center;height:22px;box-sizing:border-box;padding-left:13px}.b{width:791px;height:22px;border:1px solid #d9d9d9;box-sizing:border-box;display:flex;align-items:center;padding-left:2px;flex:none}.b fit-text{margin-top:-2px}.r{border-left:1px solid #d9d9d9;height:20px;width:20px;display:flex;align-items:center;justify-content:center}.s{margin-left:12px;border:1px solid #d9d9d9;height:22px;box-sizing:border-box;display:flex;align-items:center;padding-left:8px;color:#6d6d6d;width:140px;flex:none}.s fit-text{margin-top:-1px}',
 `<div class="n"><ui-icon name="left"></ui-icon><ui-icon name="right" style="margin-left:17px"></ui-icon><ui-icon name="chev" style="margin-left:13px"></ui-icon><ui-icon name="up" style="margin-left:10px"></ui-icon></div><div class="b"><ui-icon name="pc"></ui-icon><ui-icon name="gt" style="margin:0 9px 0 7px"></ui-icon><fit-text w="37">Réseau</fit-text><ui-icon name="gt" style="margin:0 9px 0 9px"></ui-icon><fit-text w="45">128.7.1.4</fit-text><ui-icon name="chevB" style="margin:1px 4px 0 auto"></ui-icon><div class="r"><ui-icon name="refresh"></ui-icon></div></div><div class="s"><fit-text w="114">Rechercher dans : 128</fit-text></div>`);
def('tree-item',':host{display:flex;align-items:center;height:24px;color:#000;box-sizing:border-box;width:156px;padding-left:23px}:host([child]){padding-left:33px}:host([sel]){background:#d9d9d9}.i{width:18px;display:flex;justify-content:center;margin-right:4px}fit-text{margin-top:-1px}:host([child]) .i{width:14px;margin-right:6px}',
 a=>`<div class="i"><ui-icon name="${a('icon')}"></ui-icon></div>`+lines(a('label')));
def('nav-tree',':host{display:flex;flex-direction:column;width:159px;box-sizing:border-box;border-right:1px solid #f0f0f0;padding-top:16px;flex:none}.g{margin-top:8px}',
 `<tree-item icon="star" label="Accès rapide|67"></tree-item><tree-item class="g" icon="pc" label="Ce PC|32"></tree-item><tree-item class="g" icon="drive" label="&amp;nbsp;(E:)|20"></tree-item>`+['ALGO|30','Eco|19','GestionMenagerie|96','Mister V - Double V|102','ProjetWamp|66','SITEPPEGSB|63','STAGE|34','TP algo|40'].map(t=>`<tree-item child icon="folder" label="${t}"></tree-item>`).join('')+`<tree-item class="g" sel icon="net" label="Réseau|37"></tree-item>`);
def('file-item',':host{display:flex;align-items:center;height:46px;color:#000}ui-icon{margin-right:15px}fit-text{margin-top:-2px}',a=>`<ui-icon name="netFolder"></ui-icon>`+lines(a('label')));
def('file-pane',':host{flex:1;display:block;padding:9px 0 0 19px}.g{display:grid;grid-template-columns:254px 254px 254px;row-gap:10px}.n{margin:91px 0 0 175px;color:#ed1c24;font:22px/29px Lato,sans-serif;display:flex;flex-direction:column}',
 `<div class="g"><file-item label="test partage|62.5"></file-item><file-item label="Users|28"></file-item><file-item label="www|27"></file-item><file-item label="www2|33"></file-item></div><div class="n">`+lines(`Enfin, sur n'importe qu'elle|266;;machine (du réseau biensure)|292;;taper l'adresse IP de la machine|309;;qui partage le fichier, sans oulblier|339;;les "\\\\" et vous aurez accèsa tout|322;;les fichiers partagés|193`)+'</div>');
def('explorer-window',':host{position:absolute;left:333px;top:0;width:1033px;height:579px;box-sizing:border-box;background:#fff;border-top:1px solid #4d5f92;border-bottom:1px solid #5d6a92;overflow:hidden;display:flex;flex-direction:column}.c{display:flex;flex:1;min-height:0}',
 '<explorer-title></explorer-title><explorer-tabs></explorer-tabs><explorer-ribbon></explorer-ribbon><address-bar></address-bar><div class="c"><nav-tree></nav-tree><file-pane></file-pane></div>');
def('dialog-button',':host{display:flex;align-items:center;justify-content:center;width:86px;height:24px;box-sizing:border-box;border:1px solid #adadad;background:#e1e1e1}:host([primary]){border:2px solid #0078d7}fit-text{margin-top:-2px}',a=>lines(a('label')));
def('run-dialog',':host{position:absolute;left:15px;top:511px;width:503px;height:206px;box-sizing:border-box;border:1px solid #1883d7;background:#fff;box-shadow:0 3px 12px rgba(0,0,0,.35);display:flex;flex-direction:column;color:#000}.t{height:31px;box-sizing:border-box;border-bottom:1px solid #ececec;display:flex;align-items:center;padding:0 9px 2px 8px}.b{height:112px}.m{display:flex;padding:20px 0 0 12px;line-height:15px}.m div{margin-left:19px}.m fit-text{display:block}.o{display:flex;align-items:center;padding-left:12px;margin-top:18px}.i{display:flex;align-items:center;box-sizing:border-box;width:420px;height:23px;border:1px solid #0078d7;margin-left:13px;padding:0 3px 0 4px}.sel{background:#3399ff;color:#fff;line-height:14px;padding:0 0 0 1px;height:15px;margin-top:-1px}.f{flex:1;background:#f0f0f0;display:flex;gap:8.500px;justify-content:flex-end;padding:19px 17px 0 0}',
 `<div class="t"><ui-icon name="run" w="15" h="12"></ui-icon><fit-text style="margin-left:6px" w="43">Exécuter</fit-text><ui-icon name="close" style="margin-left:auto"></ui-icon></div><div class="b"><div class="m"><ui-icon name="run" style="margin-top:4px"></ui-icon><div><fit-text w="399">Entrez le nom d’un programme, dossier, document ou ressource Internet, et</fit-text><fit-text w="154">Windows l’ouvrira pour vous.</fit-text></div></div><div class="o"><fit-text w="38">Ouvrir :</fit-text><div class="i"><div class="sel"><fit-text w="56">\\\\128.7.1.4</fit-text></div><ui-icon name="chevT" style="margin-left:auto"></ui-icon></div></div></div><div class="f"><dialog-button primary label="OK|16"></dialog-button><dialog-button label="Annuler|42"></dialog-button><dialog-button label="Parcourir...|57"></dialog-button></div>`);
def('task-button',':host{width:49px;height:40px;display:flex;align-items:center;justify-content:center;flex:none;box-sizing:border-box;position:relative;padding-right:2px}:host([open])::after{content:"";position:absolute;left:4px;right:5px;bottom:0;height:2px;background:#76b9ed}:host([multi])::after{background:linear-gradient(90deg,#76b9ed 31px,#223 31px,#223 32px,#46698c 32px)}:host([active]){background:#3f444f}:host([active])::after{left:0;right:0}',a=>`<ui-icon name="${a('icon')}" w="${a('w')}" h="${a('h')}"></ui-icon>`);
def('task-bar',':host{position:absolute;left:0;top:728px;width:1366px;height:40px;background:linear-gradient(90deg,#0b1220,#060a1a 40%,#0a1120 60%,#040917);display:flex;color:#fff}.s{width:344px;height:40px;background:#3a3a3a;box-sizing:border-box;display:flex;align-items:center;padding:0 14px 0 9px;color:#a3a3a3;font-size:14.200px}.c{position:relative;display:flex;flex-direction:column;align-items:center;line-height:18px;width:58px;margin-left:10px}.y{display:flex;align-items:center;margin-left:auto}.d{width:4px;height:40px;border-left:1px solid #70747d}',
 `<task-button icon="win" style="width:48px;padding:0"></task-button><div class="s"><ui-icon name="ring"></ui-icon><fit-text style="margin-left:5px" w="163">Taper ici pour rechercher</fit-text><ui-icon style="margin-left:auto" name="mic"></ui-icon></div><task-button icon="tview" style="width:48px;padding:0"></task-button><task-button icon="edge" style="width:52px;padding:0 0 0 2px"></task-button><task-button open multi icon="expl"></task-button><task-button open icon="wordS" w="22" h="22"></task-button><task-button open icon="excelS" w="22" h="22"></task-button><task-button open multi icon="vbox"></task-button><task-button open icon="npp"></task-button><task-button open icon="ff" w="23" h="23"></task-button><task-button open active icon="run" w="23" h="16" style="width:48px;padding:0"></task-button>
 <div class="y"><ui-icon name="tup"></ui-icon><ui-icon name="bat" style="margin-left:12px"></ui-icon><ui-icon name="wifi" style="margin-left:11px;margin-top:2px"></ui-icon><ui-icon name="vol" style="margin-left:8px"></ui-icon><div class="c"><fit-text w="27">16:30</fit-text><fit-text w="58">27/06/2017</fit-text></div><ui-icon name="notif" style="margin:0 20px 0 18px"></ui-icon><div class="d"></div></div>`);
const icons=[['bin',48,7,'Corbeille|47'],['printer',145,7,'pdfcredel|50'],['page',242,7,'NewCible.php|75'],['xlsx',339,7,'annuaire|46;;lenormand.xlsx|90'],['adobe',48,111,'Adobe Reader XI|87'],['word',145,111,'Word 2007|56'],['netDesk',242,111,'www2 (VM-TEST)|93;;- Raccourci|59'],['wamp',339,111,'Wampserver64|77'],['credel',48,215,'Credel|35'],['dll',145,215,'DLL-Files.com|75;;Client|31'],['page',242,215,'tet.php|38'],['excel',48,319,'Excel 2007|53'],['rdp',145,319,'srvdeploy.rdp|72'],['xlsx',242,319,'bdd|21;;identifiants.xlsx|80'],['ffDesk',48,423,'Mozilla Firefox|76'],['crystal',145,423,'CrystalDiskInfo|79'],['keepass',242,423,'KeePass.exe|63'],['training',1309,631,'training site|62']];
def('desk-top',':host{display:block;position:relative;width:1366px;height:768px;overflow:hidden}',
 '<desk-wallpaper></desk-wallpaper>'+icons.map(i=>`<desk-icon icon="${i[0]}" cx="${i[1]}" top="${i[2]}" label="${i[3]}"></desk-icon>`).join('')+'<explorer-window></explorer-window><run-dialog></run-dialog><task-bar></task-bar>');
/* Spreads its text over an exact width by adjusting the letter spacing. */
def('fit-text',':host{display:block;white-space:pre;flex:none}span{display:inline-block}','<span><slot></slot></span>',(e,a)=>{
  const s=e.shadowRoot.querySelector('span'),w=+a('w'),n=e.textContent.length;
  const nat=s.getBoundingClientRect().width;
  s.style.letterSpacing=((w-nat)/Math.max(1,n-1))+'px';
  e.style.width=w+'px';
});
</script>
</body>
</html>
